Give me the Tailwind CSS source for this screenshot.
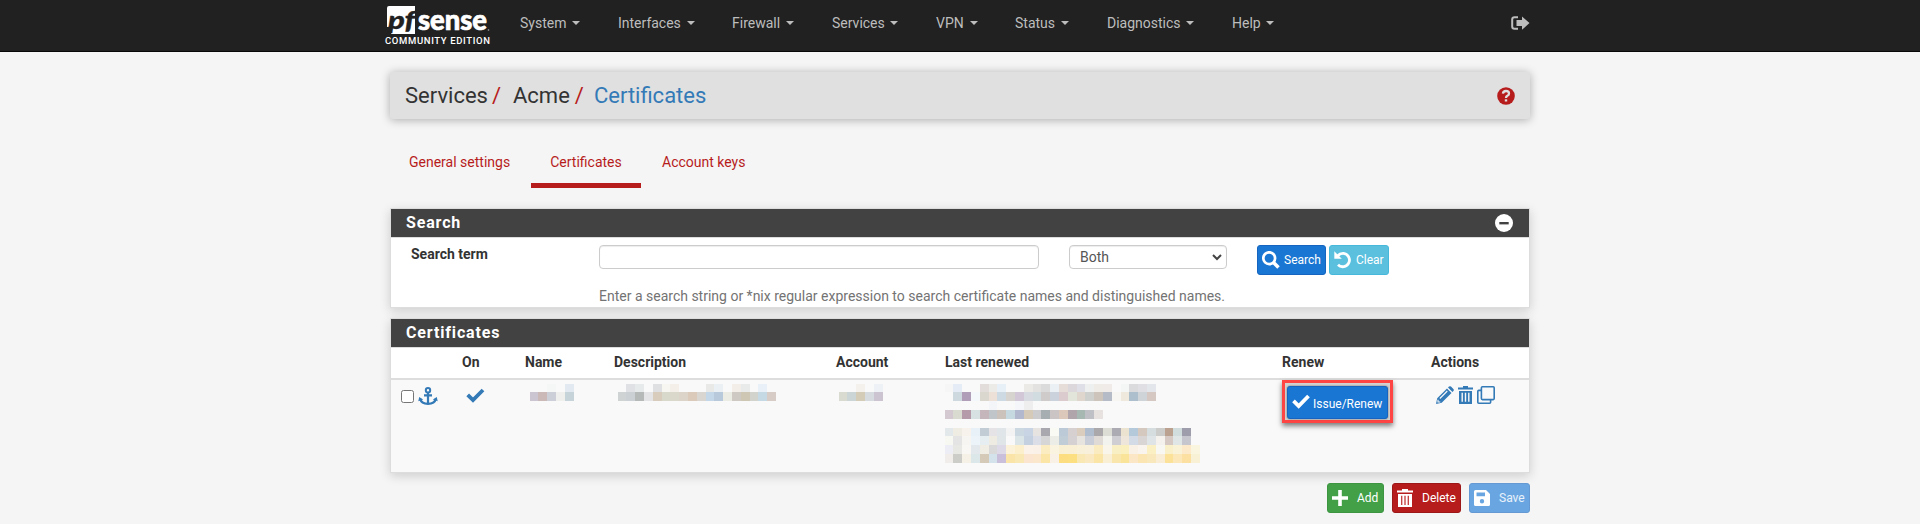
<!DOCTYPE html>
<html lang="en">
<head>
<meta charset="utf-8">
<title>Services: Acme: Certificates</title>
<script src="https://cdn.jsdelivr.net/npm/@tailwindcss/browser@4"></script>
</head>
<body class="h-[524px] overflow-hidden bg-[#f5f5f5] font-[Roboto,sans-serif] text-[14px] leading-5 text-[#333]">

<nav class="h-[52px] border-b border-[#080808] bg-[#212121]">
  <div class="mx-auto flex h-[51px] w-[1150px] items-start">
    <a class="block w-[116px]">
      <svg class="block overflow-visible" width="110" height="46" viewBox="0 -5 110 46">
        <path d="M4 1H30V29H6L8 21.500L2 22V3Q2 1 4 1Z" fill="#fff"/>
        <text x="3" y="23.500" font-family="Lato" font-weight="900" font-style="italic" font-size="25" fill="#212121" stroke="#212121" stroke-width=".3" textLength="27" lengthAdjust="spacingAndGlyphs">pf</text>
        <text x="33" y="24.500" font-family="Lato" font-weight="900" font-size="28" fill="#fff" stroke="#fff" stroke-width=".7" textLength="69" lengthAdjust="spacingAndGlyphs">sense</text>
        <circle cx="103.500" cy="25" r=".8" fill="#aaa"/>
        <text x="0" y="39" font-family="Roboto" font-weight="500" font-size="9.500" fill="#fff" textLength="105">COMMUNITY EDITION</text>
      </svg>
    </a>
    <ul class="flex pt-[13px] pl-[19px] text-[#bdbdbd]">
      <li class="flex w-[98px] items-center">System<i class="ml-[6px] border-x-4 border-t-4 border-x-transparent border-t-current"></i></li>
      <li class="flex w-[114px] items-center">Interfaces<i class="ml-[6px] border-x-4 border-t-4 border-x-transparent border-t-current"></i></li>
      <li class="flex w-[100px] items-center">Firewall<i class="ml-[6px] border-x-4 border-t-4 border-x-transparent border-t-current"></i></li>
      <li class="flex w-[104px] items-center">Services<i class="ml-[5px] border-x-4 border-t-4 border-x-transparent border-t-current"></i></li>
      <li class="flex w-[79px] items-center">VPN<i class="ml-[6px] border-x-4 border-t-4 border-x-transparent border-t-current"></i></li>
      <li class="flex w-[92px] items-center">Status<i class="ml-[6px] border-x-4 border-t-4 border-x-transparent border-t-current"></i></li>
      <li class="flex w-[125px] items-center">Diagnostics<i class="ml-[5px] border-x-4 border-t-4 border-x-transparent border-t-current"></i></li>
      <li class="flex items-center">Help<i class="ml-[5px] border-x-4 border-t-4 border-x-transparent border-t-current"></i></li>
    </ul>
    <svg class="mt-4 mr-[5px] ml-auto" width="19" height="15" viewBox="0 0 19 15"><path d="M7 1.200H3.500Q1.200 1.200 1.200 3.500V10.500Q1.200 12.800 3.500 12.800H7" fill="none" stroke="#bdbdbd" stroke-width="2"/><path d="M5.500 4H11V.5L18.500 7 11 13.800V10H5.500Z" fill="#bdbdbd"/></svg>
  </div>
</nav>

<main class="mx-auto w-[1140px]">
  <header class="mt-5 flex h-[47px] items-center rounded-[3px] bg-[#e0e0e0] pr-[15px] pl-[15px] text-[22px] shadow-[0_1px_10px_rgba(0,0,0,0.3)]">
    <span>Services</span><span class="ml-[4px] text-[#b71c1c]">/</span>
    <span class="ml-[12px]">Acme</span><span class="ml-[5px] text-[#b71c1c]">/</span>
    <span class="ml-[10px] text-[#337ab7]">Certificates</span>
    <svg class="ml-auto" width="18" height="18" viewBox="0 0 18 18"><circle cx="9" cy="9" r="8.8" fill="#b71c1c"/><path d="M5.9 6.7Q6.2 4 9 4Q12 4 12 6.5Q12 8 10.4 8.8Q9 9.6 9 11" fill="none" stroke="#e0e0e0" stroke-width="2.3"/><path d="M7.8 12.3h2.4v2.2H7.8z" fill="#e0e0e0"/></svg>
  </header>

  <ul class="mt-5 flex h-[49px] text-[#b71c1c]">
    <li class="w-[141px] pt-[13px] pl-[19px]">General settings</li>
    <li class="w-[110px] border-b-5 border-[#b71c1c] pt-[13px] text-center">Certificates</li>
    <li class="pt-[13px] pl-[21px]">Account keys</li>
  </ul>

  <section class="mt-5 h-[100px] border border-[#ddd] bg-white shadow-[0_3px_10px_rgba(0,0,0,0.16)]">
    <h2 class="flex h-[29px] items-center justify-between border-b border-[#ddd] bg-[#424242] pr-[16px] pl-[15px] text-[16px] font-bold tracking-[0.85px] text-white">Search
      <svg width="18" height="18" viewBox="0 0 18 18"><circle cx="9" cy="9" r="9" fill="#fff"/><path d="M4.3 8h9.400v2.400H4.300z" fill="#424242"/></svg>
    </h2>
    <div class="flex items-start pt-[7px]">
      <label class="-mt-px w-[208px] pl-[20px] font-bold">Search term</label>
      <input type="text" class="h-6 w-[440px] rounded-[4px] border border-[#ccc] bg-white shadow-[inset_0_1px_1px_rgba(0,0,0,0.075)]">
      <div class="ml-[30px] flex h-6 w-[158px] items-center justify-between rounded-[4px] border border-[#ccc] pr-[4px] pl-[10px] text-[#555] shadow-[inset_0_1px_1px_rgba(0,0,0,0.075)]">Both
        <svg width="10" height="7" viewBox="0 0 10 7"><path d="M1 1l4 4 4-4" fill="none" stroke="#444" stroke-width="2"/></svg>
      </div>
      <button class="ml-[30px] flex h-[30px] w-[69px] items-center rounded-[3px] border border-[#1565c0] bg-[#1976d2] pl-[4px] text-[12px] text-white">
        <svg class="mr-[4px]" width="18" height="18" viewBox="0 0 18 18"><circle cx="7.200" cy="7.200" r="5.900" fill="none" stroke="#fff" stroke-width="2.700"/><path d="M11.500 11.500l5 5" stroke="#fff" stroke-width="3.600"/></svg>Search</button>
      <button class="ml-[3px] flex h-[30px] w-[60px] items-center rounded-[3px] border border-[#46b8da] bg-[#5bc0de] pl-[4px] text-[12px] text-white">
        <svg class="mr-[4px]" width="18" height="18" viewBox="0 0 18 18"><path d="M3.500 5Q6 2.200 9.500 2.400A6.700 6.700 0 1 1 4 13.800" fill="none" stroke="#fff" stroke-width="2.800"/><path d="M.3.3V7.800H7.800Z" fill="#fff"/></svg>Clear</button>
    </div>
    <p class="mt-[11px] pl-[208px] text-[#737373]">Enter a search string or *nix regular expression to search certificate names and distinguished names.</p>
  </section>

  <section class="mt-[10px] h-[155px] border border-[#ddd] bg-[#f9f9f9] shadow-[0_3px_10px_rgba(0,0,0,0.16)]">
    <h2 class="flex h-[29px] items-center border-b border-[#ddd] bg-[#424242] pl-[15px] text-[16px] font-bold tracking-[0.85px] text-white">Certificates</h2>
    <div class="grid h-[32px] grid-cols-[71px_63px_89px_222px_109px_337px_149px_98px] border-b-2 border-[#ddd] bg-white pt-[4px] font-bold">
      <span></span><span>On</span><span>Name</span><span>Description</span><span>Account</span><span>Last renewed</span><span>Renew</span><span>Actions</span>
    </div>
    <div class="grid grid-cols-[71px_63px_89px_222px_109px_337px_149px_98px]">
      <div class="flex items-start pt-[7px] pl-[10px]">
        <span class="mt-[3px] h-[13px] w-[13px] rounded-[2.5px] border border-[#767676] bg-white"></span>
        <svg class="ml-[4px]" width="20" height="19" viewBox="0 0 20 19" fill="none" stroke="#337ab7"><circle cx="10" cy="3.300" r="2.200" stroke-width="2"/><path d="M10 5.500V17M6 8.300h8" stroke-width="2.200"/><path d="M2.200 12Q3.500 16.700 10 16.900Q16.500 16.700 17.800 12" stroke-width="2.400"/><path d="M.3 14.200L1.200 10 5.200 12.400ZM19.700 14.200L18.800 10 14.800 12.400Z" fill="#337ab7" stroke="none"/></svg>
      </div>
      <svg class="mt-[8px] ml-[4px]" width="19" height="15" viewBox="0 0 19 15"><path d="M1.700 6.800L7 12 17 2" fill="none" stroke="#337ab7" stroke-width="3.800"/></svg>
      <svg class="mt-1 ml-[5px]" width="60" height="80" data-mosaic="name" shape-rendering="crispEdges"></svg>
      <svg class="mt-1 ml-[4px]" width="170" height="80" data-mosaic="desc" shape-rendering="crispEdges"></svg>
      <svg class="mt-1 ml-[3px]" width="60" height="80" data-mosaic="account" shape-rendering="crispEdges"></svg>
      <svg class="mt-1" width="270" height="80" data-mosaic="renewed" shape-rendering="crispEdges"></svg>
      <div>
        <div class="h-[43px] w-[111px] border-3 border-[#ff4444] bg-[#d2d2d2] pt-[3px] pl-[2px] shadow-[0_3px_5px_rgba(0,0,0,0.5)]">
          <button class="flex h-[33px] w-[101px] items-center rounded-[3px] border border-[#1565c0] bg-[#1976d2] pl-[4px] text-[12px] text-white shadow-[0_0_2px_rgba(0,0,0,0.5)]">
            <svg class="mr-[3px] mb-[3px]" width="18" height="15" viewBox="0 0 18 15"><path d="M1.500 6.800L6.700 12 16.500 2" fill="none" stroke="#fff" stroke-width="3.800"/></svg><span class="mt-[2px]">Issue/Renew</span></button>
        </div>
      </div>
      <div class="flex pt-[6px] pl-[5px]">
        <svg width="18" height="18" viewBox="0 0 18 18"><path d="M0 18L1.200 12.300 11 2.500 15.500 7 5.700 16.800ZM12 1.500L13 .6Q14 -.3 15 .6L17.400 3Q18.300 4 17.400 5L16.500 6Z" fill="#337ab7"/><path d="M3.800 12.500L11.300 5M2 13.700V16H4.300" fill="none" stroke="#f9f9f9" stroke-width="1.100"/></svg>
        <svg class="ml-[4px]" width="15" height="18" viewBox="0 0 15 18"><path d="M0 1.500H5V0H10V1.500H15V3.500H0ZM1 5H14V18H1Z" fill="#337ab7"/><path d="M4.200 6.700V15.800M7.500 6.700V15.800M10.800 6.700V15.800" stroke="#f9f9f9" stroke-width="1.400"/></svg>
        <svg class="ml-[4px]" width="18" height="18" viewBox="0 0 18 18" fill="none" stroke="#337ab7" stroke-width="1.600"><rect x="4.400" y=".8" width="12.800" height="12.800" rx="1"/><path d="M4 4.400H1.800Q.8 4.400 .8 5.400V16.200Q.8 17.200 1.800 17.200H12.600Q13.600 17.200 13.600 16.200V14"/></svg>
      </div>
    </div>
  </section>

  <div class="mt-[10px] flex justify-end gap-[8px] text-[12px] text-white">
    <button class="flex h-[30px] w-[57px] items-center rounded-[3px] border border-[#3d9541] bg-[#43a047] pl-[4px]"><svg class="mr-[9px]" width="16" height="16" viewBox="0 0 16 16"><path d="M8 0V16M0 8H16" stroke="#fff" stroke-width="3.600"/></svg>Add</button>
    <button class="flex h-[30px] w-[69px] items-center rounded-[3px] border border-[#9c1818] bg-[#b71c1c] pl-[4px]"><svg class="mr-[9px]" width="16" height="18" viewBox="0 0 16 18"><path d="M0 1.500H5V0H11V1.500H16V3.500H0ZM1 5H15V18H1Z" fill="#fff"/><path d="M4.700 6.700V16M8 6.700V16M11.300 6.700V16" stroke="#c23b3b" stroke-width="1.300"/></svg>Delete</button>
    <button class="flex h-[30px] w-[61px] items-center rounded-[3px] border border-[#6499d3] bg-[#69a5e0] pl-[4px]"><svg class="mr-[9px]" width="16" height="16" viewBox="0 0 16 16"><path fill-rule="evenodd" d="M1.500 0H12L16 4V14.500Q16 16 14.500 16H1.500Q0 16 0 14.500V1.500Q0 0 1.500 0ZM2.500 2.500V6.300H11V2.500ZM8 9A2.200 2.200 0 1 0 8 13.400A2.200 2.200 0 1 0 8 9Z" fill="#fff"/></svg><span class="text-white/85">Save</span></button>
  </div>
</main>

<script>
// Redacted cell contents: one entry per block, "-" leaves a block empty.
const mosaics = {
  name: [
    "- f8f9f8 f4f7f6 - e2e9f1",
    "cbc5d1 cbb9b8 cccfd7 efefed c6d3d8"],
  desc: [
    "- dfe1e4 e6eaeb - dee0e1 f7f6f1 f5efea - - - e9e9e8 eaf0f3 - f3eee8 e9ebea - eaf0f7 -",
    "d0d3d4 cad0d3 b5bab9 e4e4e7 d8cdbd d8d8cb dad7cb ddd4c9 dbcaba d9d5d0 c3d7e9 b8c9dc ebede4 cfc9c4 cec7b3 d3d3cd c4d9e3 d8ccc7"],
  account: [
    "- - f4f1ec - eef2f6",
    "dadbd0 cbd5d6 d4ccb6 d5dbdf ccc4d1"],
  renewed: [
    "f6f6f6 e5ecf5 - - e2dddb ecebe7 e8f0f7 - - ebeae6 e3e2e0 dbdbdc eaf0f3 e6dcd8 dbd7da dfe0e7 eef0ef efebe7 f0ebe8 - f4f5f5 dbdadd dfdfe4 e3e7ec",
    "- cdd8df b09db8 f4f8fa d9d7ce ede1d7 cddae3 d7d3ce d2c7d7 d7dae0 d0dce0 cfcbcb ccd2dc dccbce e2e5da dfd7ce cdd0cc cdc4bb b6bbc8 f7f6f2 efe8dd adbfcc ced4d7 d5c7c1",
    "- - - - - f4f5f8 - - f5f6f9 eeeeee",
    "d5c9d1 d9dbd0 b59aa9 d7e1e1 c4b6bb c0c5c9 ccc2bc c7d9e0 b2b9cf d4cab7 cccccf a7aeb1 cac4c5 dbc8ba afa5ab a7b7b2 bfbfc6 e7e2df",
    "-",
    "e3e9eb efece4 f7f2ec e7f1f7 c2ccd4 e5e3e5 dfe5e8 f2f3f2 cbd8e1 c8d4e3 e6e3e0 a9a8ae f9faf4 bccad7 d6d0d0 dacdbd afbdcf aba8ac dcddd5 acabb4 ebe2cf b4c9da d5c8bf d6dddf cccccb bba18f d1dddd 9d9dab",
    "f8f8f3 e4e4e5 f6f5f2 ecf4fa e7eef1 eeece2 e0e5e8 f8f9f8 dbe4e6 c4cfe0 dbdde7 d6d6d7 ecede7 c0ccd6 d5d0d1 e7e4df c8cdd8 dfdad5 f2f3ef cfcfd3 eee6da d3dbe7 d8d5d4 dfe5e7 f5f2ed d6c9c4 e0e6e6 c6c7ce",
    "ecedf5 e7e7e4 f8f7f4 e2e8eb efede4 d9d9da ddd9e7 fcf1d9 fbf0cb fbf2e9 faf2e9 fbecc1 f9f3df f9efd2 f9efd5 f9f0d9 f9f0db faebc0 f9f5eb f9efc5 f9efbf f9f1e6 f9f4ed faf0c3 f9f7f1 f9efc9 faf2d6 fce9ca f9f5df",
    "f0edea cccdc9 f5f1e6 dce7e9 d4cab7 d4e2eb cabfdb fae4a7 fae8b4 fce5d0 fbe8cc fbe6a7 f9f1e6 fcdd80 fcdf80 fae8b4 f9e8c0 fae4a6 f9efd5 f9e6ac fae49a fbe7c6 fbe5b3 fae8bd f9edd5 fce299 fbe7b8 fce0a1 f9f1d6"]
};
const edge = i => Math.floor(i * 8.8 + 0.1);
for (const svg of document.querySelectorAll("[data-mosaic]")) {
  mosaics[svg.dataset.mosaic].forEach((line, y) => line.split(" ").forEach((c, x) => {
    if (c === "-") return;
    const r = document.createElementNS("http://www.w3.org/2000/svg", "rect");
    r.setAttribute("x", edge(x));
    r.setAttribute("y", edge(y));
    r.setAttribute("width", edge(x + 1) - edge(x));
    r.setAttribute("height", edge(y + 1) - edge(y));
    r.setAttribute("fill", "#" + c);
    svg.appendChild(r);
  }));
}
</script>
</body>
</html>
